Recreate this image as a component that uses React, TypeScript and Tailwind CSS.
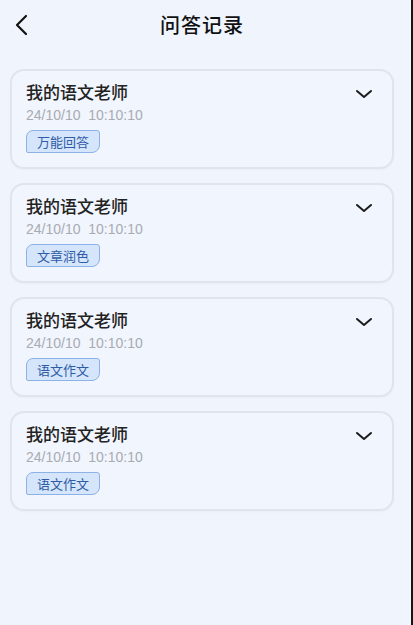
import React from 'react';

type Record = { id: number; name: string; time: string; tag: string };

const records: Record[] = [
  { id: 1, name: '我的语文老师', time: '24/10/10  10:10:10', tag: '万能回答' },
  { id: 2, name: '我的语文老师', time: '24/10/10  10:10:10', tag: '文章润色' },
  { id: 3, name: '我的语文老师', time: '24/10/10  10:10:10', tag: '语文作文' },
  { id: 4, name: '我的语文老师', time: '24/10/10  10:10:10', tag: '语文作文' },
];

const font = { fontFamily: '"Noto Sans CJK SC", "Noto Sans", sans-serif' };

const RecordCard: React.FC<{ item: Record }> = ({ item }) => (
  <div className="relative h-[100px] rounded-[14px] border-2 border-[#dfe5ef] bg-[#f1f5fd] pl-[14px] pt-[9px] shadow-[0_1px_2px_rgba(0,0,0,0.03)]">
    <div className="text-[17px] leading-[24px] font-medium text-[#222]">{item.name}</div>
    <div className="mt-[2px] whitespace-pre text-[14px] leading-[18px] text-[#a8abb1] font-['Liberation_Sans',sans-serif]">
      {item.time}
    </div>
    <div className="mt-[6px] inline-flex h-[23px] items-center rounded-tl-[7px] rounded-tr-[3px] rounded-br-[8px] rounded-bl-[2px] border border-[#8db2e6] bg-[#d5e5fb] px-[10px] text-[13px] text-[#2e5ca6]">
      {item.tag}
    </div>
    <svg
      className="absolute right-[19px] top-[17px]"
      width="18"
      height="12"
      viewBox="0 0 18 12"
      fill="none"
    >
      <path d="M2 3l7 6 7-6" stroke="#1c1c1c" strokeWidth="2" strokeLinecap="round" strokeLinejoin="round" />
    </svg>
  </div>
);

export default function App() {
  return (
    <div className="flex h-[625px] w-[413px] overflow-hidden" style={font}>
      <div className="flex w-[411px] flex-col bg-[#eff4fd]">
        {/* Header */}
        <div className="relative flex h-[50px] items-center justify-center pr-[7px]">
          <svg className="absolute left-[13px] top-[13px]" width="18" height="24" viewBox="0 0 18 24" fill="none">
            <path d="M13 3l-9 9 9 9" stroke="#111" strokeWidth="2.2" strokeLinecap="round" strokeLinejoin="round" />
          </svg>
          <h1 className="text-[20px] font-medium tracking-[1px] text-[#111]">问答记录</h1>
        </div>

        {/* Records */}
        <div className="ml-[10px] mt-[19px] flex w-[384px] flex-col gap-[14px]">
          {records.map((r) => (
            <RecordCard key={r.id} item={r} />
          ))}
        </div>
      </div>
      <div className="w-[2px] bg-[#151515]" />
    </div>
  );
}
